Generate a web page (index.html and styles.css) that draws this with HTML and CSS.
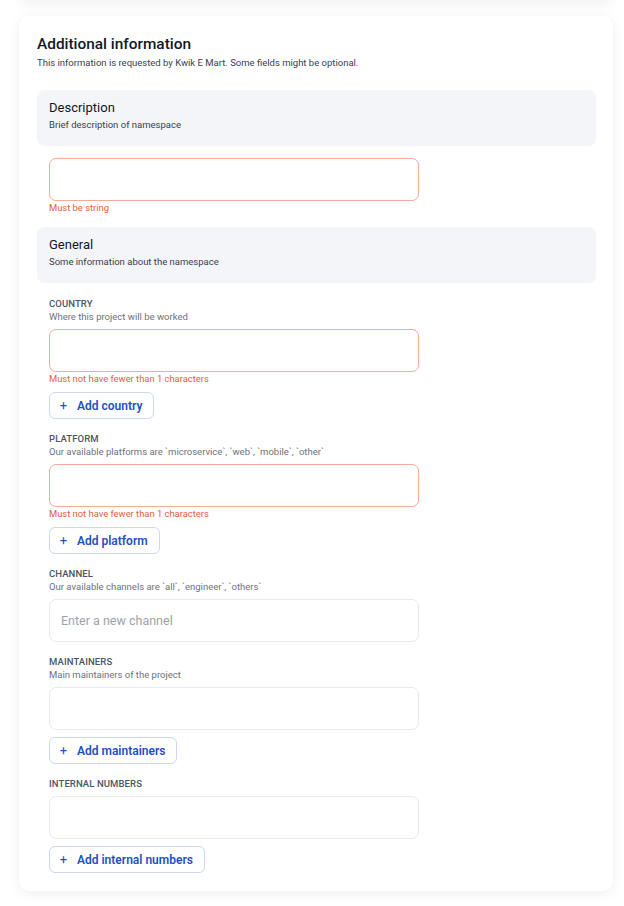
FILE: index.html
```html
<!DOCTYPE html>
<html lang="en">
<head>
<meta charset="utf-8">
<title>Additional information</title>
<link rel="stylesheet" href="styles.css">
</head>
<body>
<div class="page">
  <div class="prev-card"></div>
  <section class="card">
    <h1 class="card-title">Additional information</h1>
    <p class="card-sub">This information is requested by Kwik E Mart. Some fields might be optional.</p>

    <div class="section-head">
      <h2 class="section-title">Description</h2>
      <p class="section-sub">Brief description of namespace</p>
    </div>
    <div class="fields fields-compact">
      <div class="field">
        <div class="input error"></div>
        <p class="err">Must be string</p>
      </div>
    </div>

    <div class="section-head">
      <h2 class="section-title">General</h2>
      <p class="section-sub">Some information about the namespace</p>
    </div>
    <div class="fields">
      <div class="field">
        <div class="label">COUNTRY</div>
        <div class="hint">Where this project will be worked</div>
        <div class="input error"></div>
        <p class="err">Must not have fewer than 1 characters</p>
        <button class="add"><span class="plus">+</span>Add country</button>
      </div>
      <div class="field">
        <div class="label">PLATFORM</div>
        <div class="hint">Our available platforms are `microservice`, `web`, `mobile`, `other`</div>
        <div class="input error"></div>
        <p class="err">Must not have fewer than 1 characters</p>
        <button class="add"><span class="plus">+</span>Add platform</button>
      </div>
      <div class="field">
        <div class="label">CHANNEL</div>
        <div class="hint">Our available channels are `all`, `engineer`, `others`</div>
        <div class="input"><span class="placeholder">Enter a new channel</span></div>
      </div>
      <div class="field">
        <div class="label">MAINTAINERS</div>
        <div class="hint">Main maintainers of the project</div>
        <div class="input"></div>
        <button class="add"><span class="plus">+</span>Add maintainers</button>
      </div>
      <div class="field">
        <div class="label">INTERNAL NUMBERS</div>
        <div class="input"></div>
        <button class="add"><span class="plus">+</span>Add internal numbers</button>
      </div>
    </div>
  </section>
</div>
</body>
</html>
```

FILE: styles.css
```css
* { box-sizing: border-box; }
html, body { margin: 0; padding: 0; background: #ffffff; }
body {
  font-family: Roboto, "Liberation Sans", Arial, sans-serif;
  color: #111827;
}
.page {
  padding: 0 11px 16px 19px;
}
.prev-card {
  height: 40px;
  margin-top: -40px;
  border-radius: 10px;
  background: #fff;
  box-shadow: 0 4px 14px rgba(15, 23, 42, 0.06);
}
.card {
  margin-top: 16px;
  background: #fff;
  border-radius: 10px;
  box-shadow: 0 2px 12px rgba(15, 23, 42, 0.07);
  padding: 18px 17px 18px 18px;
}
.card-title {
  margin: 0;
  font-size: 15.4px;
  line-height: 20px;
  font-weight: 500;
  color: #111827;
}
.card-sub {
  margin: 3px 0 0;
  font-size: 9.5px;
  line-height: 12px;
  color: #374151;
}
.section-head {
  margin-top: 21px;
  background: #f3f5f8;
  border-radius: 7px;
  padding: 9px 12px 15px;
}
.fields + .section-head { margin-top: 13px; }
.section-title {
  margin: 0;
  font-size: 13px;
  line-height: 17px;
  font-weight: 400;
  color: #111827;
}
.section-sub {
  margin: 3px 0 0;
  font-size: 9.5px;
  line-height: 12px;
  color: #374151;
}
.fields {
  padding-left: 12px;
  margin-top: 15px;
  display: flex;
  flex-direction: column;
  gap: 14px;
}
.fields-compact { margin-top: 12px; }
.field {
  display: flex;
  flex-direction: column;
  align-items: flex-start;
}
.label {
  font-size: 9.5px;
  line-height: 12px;
  font-weight: 500;
  color: #4b5563;
  letter-spacing: 0.1px;
}
.hint {
  margin-top: 1px;
  font-size: 9.5px;
  line-height: 12px;
  color: #6b7280;
}
.input {
  margin-top: 6px;
  width: 370px;
  height: 43px;
  border: 1px solid #e6e9ef;
  border-radius: 7px;
  background: #fff;
  display: flex;
  align-items: center;
  padding: 0 11px;
}
.input.error { border-color: #f2ab97; }
.fields > .field:first-child > .input:first-child { margin-top: 0; }
.placeholder {
  font-size: 12.5px;
  color: #9ca3af;
}
.err {
  margin: 1px 0 0;
  font-size: 9.4px;
  line-height: 12px;
  color: #e2603e;
}
.add {
  margin-top: 7px;
  height: 27px;
  border: 1px solid #cbd7f3;
  border-radius: 6px;
  background: #fff;
  padding: 0 11px 0 9px;
  display: flex;
  align-items: center;
  font-family: inherit;
  font-size: 12px;
  font-weight: 600;
  color: #1f4fc7;
}
.plus {
  font-size: 13px;
  font-weight: 400;
  width: 9px;
  margin-right: 9px;
  text-align: center;
}
```
